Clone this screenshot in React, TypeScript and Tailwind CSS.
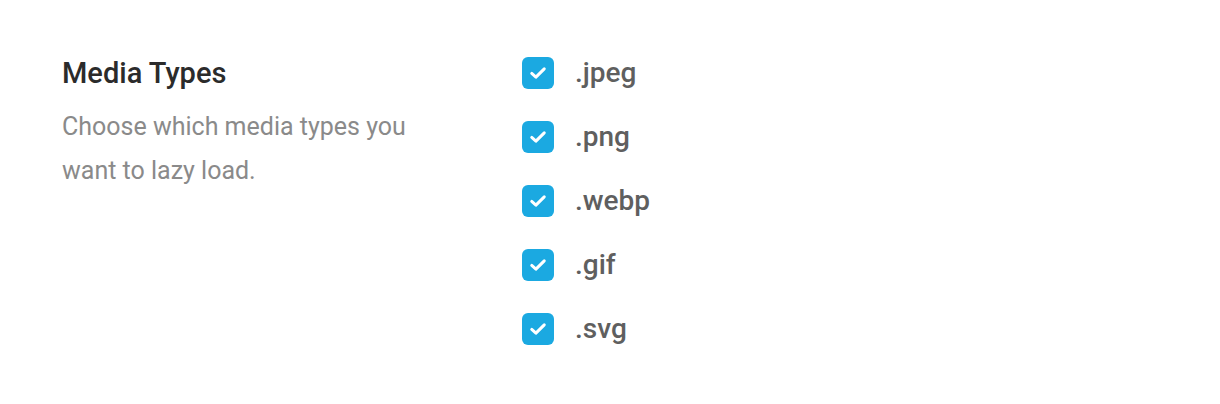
import React from "react";

const types = [".jpeg", ".png", ".webp", ".gif", ".svg"];

function Check() {
  return (
    <span className="flex h-8 w-8 items-center justify-center rounded-md bg-[#1ba9e1]">
      <svg width="20" height="20" viewBox="0 0 24 24" fill="none" stroke="white" strokeWidth="3.6" strokeLinecap="round" strokeLinejoin="round">
        <path d="M4.5 12.5l5 4.5L19.5 7" />
      </svg>
    </span>
  );
}

export default function App() {
  return (
    <div className="h-[404px] w-full bg-white font-['Roboto',sans-serif]">
      <div className="flex pl-[62px] pt-[57px]">
        <div className="w-[460px]">
          <h2 className="text-[29px] font-medium leading-8 text-[#2b2b2b]">Media Types</h2>
          <p className="mt-4 w-[380px] text-[25px] leading-[44px] text-[#8a8a8a]">
            Choose which media types you want to lazy load.
          </p>
        </div>
        <ul className="flex flex-col gap-8">
          {types.map((t) => (
            <li key={t} className="flex items-center gap-[21px]">
              <Check />
              <span className="text-[28px] font-medium leading-8 text-[#5f5f5f]">{t}</span>
            </li>
          ))}
        </ul>
      </div>
    </div>
  );
}
